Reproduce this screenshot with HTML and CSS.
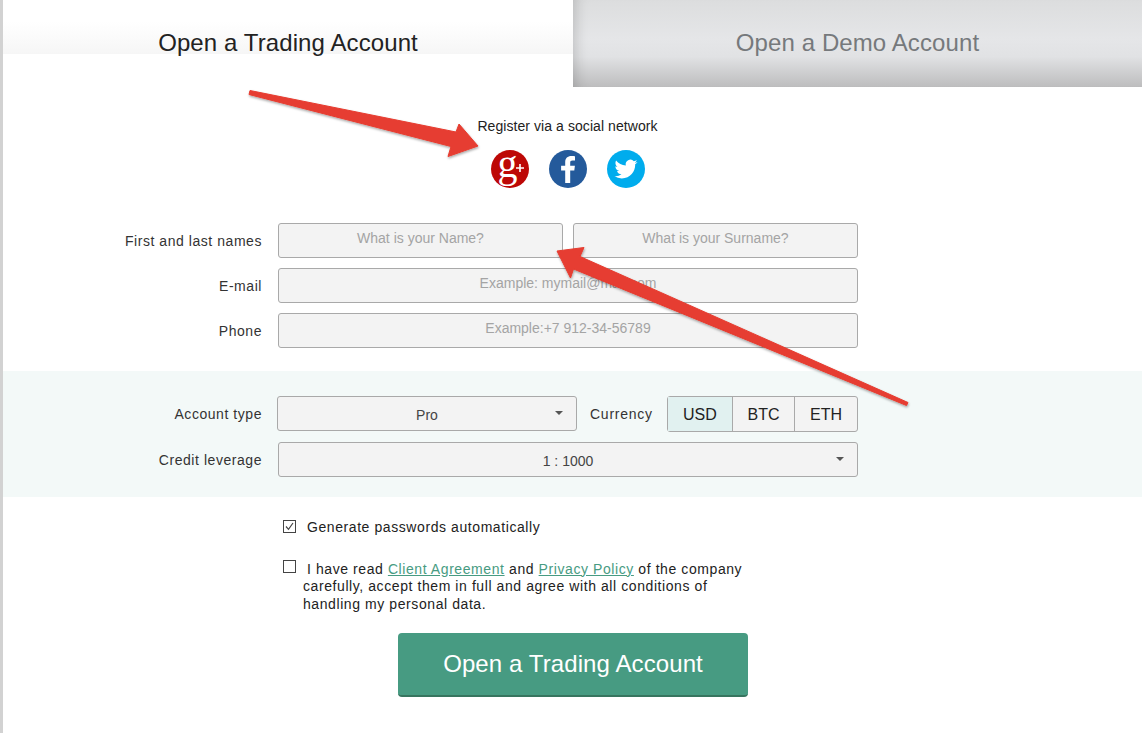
FILE: index.html
```html
<!DOCTYPE html>
<html lang="en">
<head>
    <meta charset="UTF-8">
    <meta name="viewport" content="width=device-width, initial-scale=1.0">
    <title>Open a Trading Account</title>
    <link rel="stylesheet" href="styles.css">
</head>
<body>
    <div class="page">
        <div class="tabs">
            <div class="tab tab-active"><span>Open a Trading Account</span></div>
            <div class="tab tab-demo"><span>Open a Demo Account</span></div>
        </div>

        <div class="social">
            <p class="social-title">Register via a social network</p>
            <div class="social-icons">
                <svg class="icon" viewBox="0 0 38 38">
                    <circle cx="19" cy="19" r="19" fill="#bd0806"/>
                    <text x="6.500" y="27" class="gplus-g">g</text>
                    <path d="M28.200 14h1.600v3.200H33v1.600h-3.200V22h-1.600v-3.200H25v-1.600h3.200z" fill="#fff"/>
                </svg>
                <svg class="icon" viewBox="0 0 38 38">
                    <circle cx="19" cy="19" r="19" fill="#245a9b"/>
                    <path d="M21.200 33V20.600h4.100l.6-4.800h-4.700v-3c0-1.400.4-2.300 2.400-2.300H26V6.200c-.5-.1-2-.2-3.700-.2-3.600 0-6.100 2.200-6.100 6.300v3.500h-4.100v4.800h4.100V33z" fill="#fff"/>
                </svg>
                <svg class="icon" viewBox="0 0 38 38">
                    <circle cx="19" cy="19" r="19" fill="#00aced"/>
                    <g transform="translate(7.500 7.500) scale(.96)">
                        <path d="M23.953 4.570a10 10 0 01-2.825.775 4.958 4.958 0 002.163-2.723c-.951.555-2.005.959-3.127 1.184a4.920 4.920 0 00-8.384 4.482C7.690 8.095 4.067 6.130 1.640 3.162a4.822 4.822 0 00-.666 2.475c0 1.710.870 3.213 2.188 4.096a4.904 4.904 0 01-2.228-.616v.060a4.923 4.923 0 003.946 4.827 4.996 4.996 0 01-2.212.085 4.936 4.936 0 004.604 3.417 9.867 9.867 0 01-6.102 2.105c-.390 0-.779-.023-1.170-.067a13.995 13.995 0 007.557 2.209c9.053 0 13.998-7.496 13.998-13.985 0-.210 0-.420-.015-.630A9.935 9.935 0 0024 4.590z" fill="#fff"/>
                    </g>
                </svg>
            </div>
        </div>

        <form class="form">
            <div class="contacts">
                <div class="row">
                    <label class="row-label">First and last names</label>
                    <input class="field" type="text" placeholder="What is your Name?">
                    <input class="field" type="text" placeholder="What is your Surname?">
                </div>
                <div class="row">
                    <label class="row-label">E-mail</label>
                    <input class="field" type="text" placeholder="Example: mymail@mail.com">
                </div>
                <div class="row">
                    <label class="row-label">Phone</label>
                    <input class="field" type="text" placeholder="Example:+7 912-34-56789">
                </div>
            </div>

            <div class="band">
                <div class="row row-account">
                    <label class="row-label">Account type</label>
                    <div class="select select-type">Pro</div>
                    <span class="currency-label">Currency</span>
                    <div class="segments">
                        <div class="segment segment-on">USD</div>
                        <div class="segment">BTC</div>
                        <div class="segment">ETH</div>
                    </div>
                </div>
                <div class="row">
                    <label class="row-label">Credit leverage</label>
                    <div class="select">1 : 1000</div>
                </div>
            </div>

            <div class="checks">
                <div class="check">
                    <span class="box">
                        <svg viewBox="0 0 11 11"><path d="M2 5.500l2.500 2.800L9 2" fill="none" stroke="#444" stroke-width="1.200"/></svg>
                    </span>
                    Generate passwords automatically
                </div>
                <div class="check check-terms">
                    <span class="box"></span>
                    I have read <a href="#">Client Agreement</a> and <a href="#">Privacy Policy</a> of the company carefully, accept them in full and agree with all conditions of handling my personal data.
                </div>
            </div>

            <button class="btn-open" type="button">Open a Trading Account</button>
        </form>

        <svg class="arrows" viewBox="0 0 1142 733">
            <defs>
                <filter id="arrow-shadow" x="-5%" y="-5%" width="110%" height="115%">
                    <feDropShadow dx="0.500" dy="1.500" stdDeviation="0.800" flood-color="#000" flood-opacity="0.35"/>
                </filter>
            </defs>
            <g filter="url(#arrow-shadow)" fill="#e63c30" stroke="#e63c30" stroke-width="1" stroke-linejoin="round">
                <path d="M250 90.500 L456 132 L459 124 L478 146 L448 156.500 L451 146.500 L249 94.500 Z"/>
                <path d="M908 402.500 L580 256.500 L584 247.500 L557 251 L570.500 278 L573.500 269 L906.500 405.500 Z"/>
            </g>
        </svg>
    </div>
</body>
</html>
```

FILE: styles.css
```css
* {
    box-sizing: border-box;
}
html, body {
    margin: 0;
    padding: 0;
    height: 100%;
    overflow: hidden;
}
body {
    font-family: "Liberation Sans", Arial, sans-serif;
    font-size: 14px;
    color: #222;
    background-color: #fff;
}
.page {
    position: relative;
    height: 733px;
    border-left: 3px solid #d2d2d2;
}
.tabs {
    display: flex;
    height: 87px;
}
.tab {
    flex: 0 0 570px;
    font-size: 24px;
    line-height: 28px;
    letter-spacing: 0.1px;
    text-align: center;
    padding-top: 29px;
}
.tab-active {
    height: 54px;
    color: #222;
    background: linear-gradient(to bottom, #fff 40%, #f6f6f6 100%);
}
.tab-demo {
    flex: 1;
    color: #76797c;
    background: linear-gradient(to bottom, #dcddde 0%, #e5e6e8 45%, #e1e2e4 65%, #bdbdbe 100%);
    box-shadow: inset 14px 0 14px -12px rgba(0, 0, 0, 0.18);
}
.social {
    text-align: center;
    padding-top: 31px;
    padding-right: 10px;
    height: 136px;
}
.social-title {
    margin: 0;
    line-height: 16px;
    letter-spacing: 0.07px;
}
.social-icons {
    display: flex;
    justify-content: center;
    gap: 20px;
    margin-top: 16px;
}
.icon {
    width: 38px;
    height: 38px;
}
.gplus-g {
    font-family: "Liberation Serif", serif;
    font-size: 40px;
    fill: #fff;
}
.form {
    margin: 0;
}
.row {
    display: flex;
    align-items: flex-start;
    margin-bottom: 10px;
}
.row-label {
    flex: 0 0 259px;
    text-align: right;
    margin-right: 16px;
    padding-top: 10px;
    line-height: 16px;
    letter-spacing: 0.55px;
    color: #333;
}
.contacts {
    height: 148px;
}
.field {
    flex: 0 1 285px;
    width: 285px;
    height: 35px;
    margin: 0 10px 0 0;
    padding: 0 10px 6px;
    background-color: #f3f3f3;
    border: 1px solid #a9a9a9;
    border-radius: 3px;
    font-family: inherit;
    font-size: 14px;
    text-align: center;
    color: #333;
}
.field:only-of-type {
    flex: 0 0 580px;
    width: 580px;
}
.field::placeholder {
    color: #a4a4a4;
    opacity: 1;
}
.band {
    height: 126px;
    padding-top: 25px;
    background-color: #f3f9f8;
}
.row-account {
    height: 36px;
}
.select {
    position: relative;
    width: 580px;
    height: 35px;
    line-height: 36px;
    text-align: center;
    color: #444;
    background-color: #f3f3f3;
    border: 1px solid #a9a9a9;
    border-radius: 3px;
}
.select::after {
    content: "";
    position: absolute;
    right: 13px;
    top: 14px;
    border-left: 4px solid transparent;
    border-right: 4px solid transparent;
    border-top: 4px solid #555;
}
.select-type {
    width: 300px;
    margin-left: -1px;
}
.currency-label {
    margin-left: 13px;
    margin-right: 14px;
    padding-top: 10px;
    line-height: 16px;
    letter-spacing: 0.75px;
    color: #333;
}
.segments {
    display: flex;
    width: 191px;
    height: 36px;
    background-color: #f3f3f3;
    border: 1px solid #a9a9a9;
    border-radius: 3px;
    font-size: 16px;
    line-height: 36px;
    text-align: center;
    color: #222;
}
.segment {
    flex: 1 1 0;
    border-left: 1px solid #a9a9a9;
}
.segment:first-child {
    flex: 0 0 64px;
    border-left: none;
}
.segment-on {
    background-color: #e1f1f0;
}
.checks {
    padding-top: 22px;
    margin-left: 300px;
    width: 450px;
    height: 136px;
    letter-spacing: 0.58px;
    line-height: 17.5px;
}
.check {
    color: #222;
}
.check-terms {
    margin-top: 23px;
}
.box {
    display: inline-block;
    width: 13px;
    height: 13px;
    margin: 0 6.500px 0 -20px;
    vertical-align: -1px;
    border: 1px solid #444;
    background-color: #fff;
}
.check-terms .box {
    vertical-align: 1px;
}
.box svg {
    display: block;
    width: 11px;
    height: 11px;
}
.checks a {
    color: #479b82;
    text-decoration: underline;
}
.btn-open {
    display: block;
    width: 350px;
    height: 64px;
    margin-left: 395px;
    padding: 0;
    border: none;
    border-bottom: 2px solid #37755f;
    border-radius: 4px;
    background-color: #479b82;
    color: #fff;
    font-family: inherit;
    font-size: 24px;
    letter-spacing: 0.1px;
    cursor: pointer;
}
.arrows {
    position: absolute;
    left: -3px;
    top: 0;
    width: 1142px;
    height: 733px;
    pointer-events: none;
}
```
